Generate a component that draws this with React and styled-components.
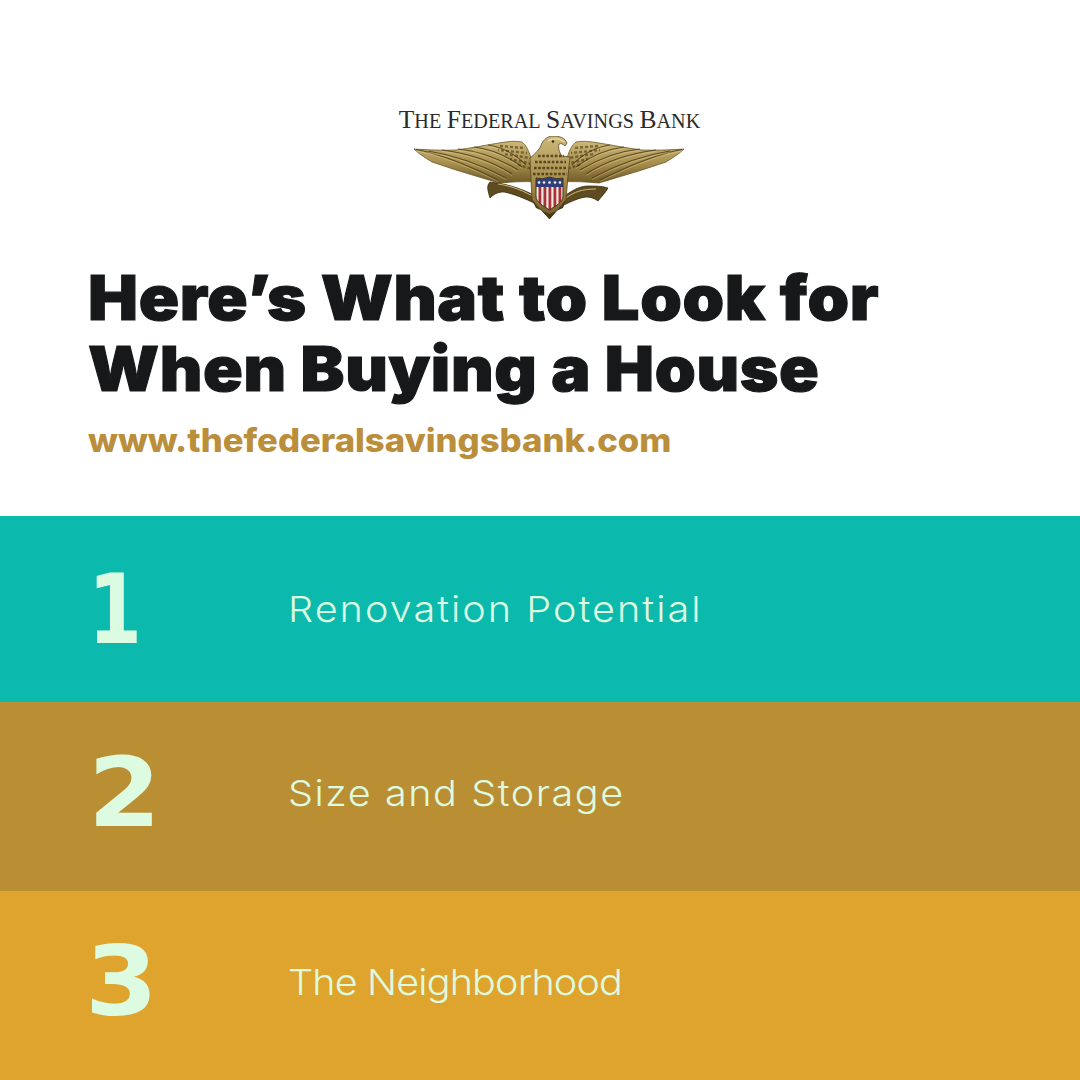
import React from "react";
import styled, { createGlobalStyle } from "styled-components";

const Global = createGlobalStyle`
  html, body { margin: 0; padding: 0; background: #fff; }
  #root { width: 1080px; height: 1080px; overflow: hidden; }
`;
const Page = styled.main`
  width: 1080px; height: 1080px; display: flex; flex-direction: column; background: #fff;
  font-family: Inter, "Liberation Sans", sans-serif;
`;
const Header = styled.header`
  height: 516px; box-sizing: border-box; padding: 105px 88px 0; display: flex; flex-direction: column;
`;
const Logo = styled.div`
  display: flex; flex-direction: column; align-items: center; align-self: center; margin-left: 19px;
`;
const BankName = styled.div`
  font-family: "Liberation Serif", serif; font-size: 20.2px; line-height: 30px; text-transform: uppercase;
  color: #2b2a2c; white-space: nowrap; display: flex; gap: 5.5px; align-items: baseline;
`;
const BankWord = styled.span`
  display: inline-block;
  &::first-letter { font-size: 25.5px; }
`;
const Eagle = styled.svg`
  display: block; width: 272px; height: 86px;
`;
const Title = styled.h1`
  margin: 40px 0 0; font-size: 62px; line-height: 71px; font-weight: 900; color: #161819;
  -webkit-text-stroke: 1.1px #161819; letter-spacing: 0.6px;
`;
const TitleLine = styled.span`
  display: block; white-space: nowrap; transform-origin: left center; transform: scaleX(${p => p.$sx});
`;
const Url = styled.div`
  margin-top: 17px; font-size: 32.5px; line-height: 40px; font-weight: 800; color: #ba8e3a; white-space: nowrap;
  transform-origin: left center; transform: scaleX(1.066);
`;
const Band = styled.section`
  height: ${p => p.$h}px; background: ${p => p.$bg}; display: flex; align-items: center; padding: 0 0 ${p => p.$up}px 88px; box-sizing: border-box;
`;
const Num = styled.div`
  width: ${p => 200 - p.$nudge}px; margin-left: ${p => p.$nudge}px; flex: none;
  font-family: "DejaVu Sans", sans-serif; font-weight: 700; font-size: 97px; line-height: 1; color: #dcfbe0;
  transform-origin: left center; transform: scaleX(${p => p.$sx});
`;
const Label = styled.div`
  font-size: 36px; font-weight: 300; color: #dcfbe0; white-space: nowrap; letter-spacing: ${p => p.$ls}px;
  transform-origin: left center; transform: scaleX(1.1);
`;

const long = [
  "M2 13.5 C26 18 56 30 84 44", "M14 15 C40 19 68 29 92 42", "M28 14 C52 17 78 25 98 38",
  "M44 13 C64 15 84 22 104 34", "M60 11 C76 13 92 19 108 31", "M74 9 C88 11 100 17 112 29",
];
const scales = ["M86 10 L110 12", "M84 14 L113 17", "M90 18 L116 22", "M96 23 L118 28", "M102 28 L118 33"];
const Wing = () => (
  <g>
    <path d="M0 13 C14 14 28 14.5 42 14 C58 12 72 9 85 7 C94 5.5 102 4.5 108 6 C112 9 115 14 118 26 L122 46 C110 45 98 46 85 47 L75 44 L42 34 L18 26 C10 21 4 17 0 13Z" fill="url(#gold)" stroke="#5b4a20" strokeWidth=".7" />
    {long.map((d, i) => <path key={i} d={d} fill="none" stroke="#54431c" strokeWidth="1.1" opacity=".9" />)}
    {long.map((d, i) => <path key={i} d={d} transform="translate(0 1.5)" fill="none" stroke="#e2d29c" strokeWidth=".6" opacity=".7" />)}
    {scales.map((d, i) => <path key={i} d={d} fill="none" stroke="#4a3a18" strokeWidth="2.4" strokeDasharray="3 2" strokeDashoffset={i * 2} opacity=".62" />)}
  </g>
);
const Shield = "M122 42 Q128 44 135.5 41 Q143 44 149 42 V60 C149 67 141 70 135.5 74 C130 70 122 67 122 60Z";

const App = () => (
  <Page>
    <Global />
    <Header>
      <Logo>
        <BankName>
          <BankWord>The</BankWord><BankWord>Federal</BankWord><BankWord>Savings</BankWord><BankWord>Bank</BankWord>
        </BankName>
        <Eagle viewBox="0 0 272 86" aria-hidden="true">
          <defs>
            <linearGradient id="gold" x1="0" y1="0" x2="0" y2="1">
              <stop offset="0" stopColor="#cdb878" />
              <stop offset=".55" stopColor="#a58c4a" />
              <stop offset="1" stopColor="#6f5a28" />
            </linearGradient>
            <clipPath id="sh"><path d={Shield} /></clipPath>
          </defs>
          <Wing />
          <g transform="translate(270 0) scale(-1 1)"><Wing /></g>
          <path d="M76 46 C72 50 74 55 76 62 C80 58 84 56 90 56 C100 58 110 62 122 68 L122 60 C110 54 96 48 76 46Z" fill="#5e4b1f" stroke="#2f250e" strokeWidth=".7" />
          <path d="M148 62 C158 54 166 50 174 50 C182 50 188 50 194 52 C192 56 188 60 184 65 C180 62 176 61 172 61 C164 62 156 66 148 70Z" fill="#5e4b1f" stroke="#2f250e" strokeWidth=".7" />
          <path d="M84 48 C98 50 110 55 122 62 M152 62 C160 56 168 53 182 53" stroke="#cdb878" strokeWidth="1" fill="none" />
          <path d="M116 22 C122 17 126 13 128 7 C131 2 135 0 139 0 C146 0 151 2 153 7 L151 10 C149 8 147 7 145 8 C144 12 145 16 148 20 L156 21 L154 40 L152 64 L135.5 83 L118 64Z" fill="url(#gold)" stroke="#4a3a18" strokeWidth=".7" />
          <path d="M124 20 H150 M121 26 H152 M120 32 H153 M119 38 H153" stroke="#3e3013" strokeWidth="2.6" strokeDasharray="2.6 1.6" fill="none" opacity=".8" />
          <path d="M134 5 C138 2 146 2 150 6" stroke="#e6d8a6" strokeWidth="1.2" fill="none" />
          <circle cx="139" cy="5.5" r="1.2" fill="#2f250e" />
          <path d="M118 64 L135.5 83 L152 64 L149 72 L135.5 78 L122 72Z" fill="#4a3a18" />
          <g clipPath="url(#sh)">
            <rect x="122" y="40" width="27" height="36" fill="#f2eadf" />
            {[124.5, 129.5, 134.5, 139.5, 144.5].map(x => <rect key={x} x={x} y="50" width="2.8" height="26" fill="#a92f3a" />)}
            <rect x="122" y="40" width="27" height="11" fill="#2f3f7e" />
            {[125, 130, 135.5, 141, 146].map(x => <circle key={x} cx={x} cy="46.5" r="1.3" fill="#f4f1ea" />)}
          </g>
          <path d={Shield} fill="none" stroke="#43351a" strokeWidth="1" />
        </Eagle>
      </Logo>
      <Title>
        <TitleLine $sx={1.075}>Here’s What to Look for</TitleLine>
        <TitleLine $sx={1.06}>When Buying a House</TitleLine>
      </Title>
      <Url>www.thefederalsavingsbank.com</Url>
    </Header>
    <Band $h={186} $up={0} $bg="#0bbaac"><Num $sx={0.8} $nudge={0}>1</Num><Label $ls={1.85}>Renovation Potential</Label></Band>
    <Band $h={189} $up={8} $bg="#ba8e33"><Num $sx={1.08} $nudge={0}>2</Num><Label $ls={1.4}>Size and Storage</Label></Band>
    <Band $h={189} $up={8} $bg="#dfa42d"><Num $sx={1.08} $nudge={-3}>3</Num><Label $ls={-0.8}>The Neighborhood</Label></Band>
  </Page>
);
export default App;
